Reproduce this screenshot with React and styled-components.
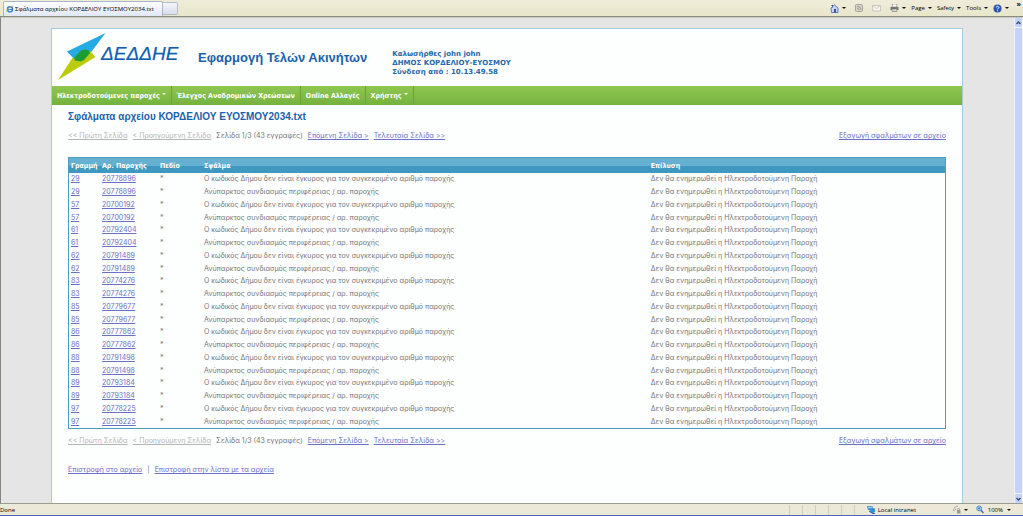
import styled, { createGlobalStyle } from "styled-components";

const GlobalStyle = createGlobalStyle`
  * {
    box-sizing: border-box;
  }

  body {
    margin: 0;
    font-family: Inter, Verdana, sans-serif;
    font-size: 7px;
    color: #777;
    background: #e5e5e5;
  }
`;

const pairs = [
  [29, 20778896],
  [57, 20700192],
  [61, 20792404],
  [62, 20791489],
  [83, 20774276],
  [85, 20779677],
  [86, 20777862],
  [88, 20791498],
  [89, 20793184],
  [97, 20778225],
];

const messages = [
  "Ο κωδικός Δήμου δεν είναι έγκυρος για τον συγκεκριμένο αριθμό παροχής",
  "Ανύπαρκτος συνδιασμός περιφέρειας / αρ. παροχής",
];

const rows = pairs.flatMap(([line, supply]) =>
  messages.map((message) => ({ line, supply, message }))
);

function Pager() {
  return (
    <PagerRow>
      <PagerGroup>
        <MutedLink href="#">&lt;&lt; Πρώτη Σελίδα</MutedLink>
        <MutedLink href="#">&lt; Προηγούμενη Σελίδα</MutedLink>
        <span>Σελίδα 1/3 (43 εγγραφές)</span>
        <TextLink href="#">Επόμενη Σελίδα &gt;</TextLink>
        <TextLink href="#">Τελευταία Σελίδα &gt;&gt;</TextLink>
      </PagerGroup>
      <TextLink href="#">Εξαγωγή σφαλμάτων σε αρχείο</TextLink>
    </PagerRow>
  );
}

function Logo() {
  return (
    <svg width="124" height="50" viewBox="0 0 124 50" role="img" aria-label="ΔΕΔΔΗΕ">
      <path d="M48.5 0 10 18.5 19 27.5H27L35 18Z" fill="#25aae3" />
      <path d="M1 47 20 18H33L38.5 24Z" fill="#bccc0c" />
      <path d="M10 18.5 19 27.5 28 17Z" fill="#25aae3" />
      <path d="M24 17.5 28 16.5 32 17.5 33 20 27 27 24 28.5 18 27.5 17 25Z" fill="#1d9c30" />
      <text
        x="44"
        y="27"
        fontFamily="Liberation Sans, Arial, sans-serif"
        fontSize="19"
        fontStyle="italic"
        fill="#0f5fae"
        stroke="#0f5fae"
        strokeWidth="0.2"
      >
        ΔΕΔΔΗΕ
      </text>
    </svg>
  );
}

function IeIcon() {
  return (
    <svg width="8" height="8" viewBox="0 0 8 8" aria-hidden="true">
      <circle cx="4" cy="4.3" r="2.6" fill="none" stroke="#2a7fd4" strokeWidth="1.4" />
      <path d="M2 4.4H6.6" stroke="#2a7fd4" />
      <path d="M.6 7C0 5 4 .8 7.4 1.2" fill="none" stroke="#e0b040" strokeWidth=".8" />
    </svg>
  );
}

function HomeIcon() {
  return (
    <svg width="9" height="9" viewBox="0 0 9 9" aria-hidden="true">
      <path d="M1 4 4.5 1 8 4V8.5H1.6Z" fill="#c9d5f2" stroke="#4a66ab" strokeWidth=".8" />
      <path d="M1.2 1H3V4" fill="#35529d" />
      <path d="M4 5H6V8.5H4Z" fill="#35529d" />
    </svg>
  );
}

function FeedIcon() {
  return (
    <svg width="8" height="8" viewBox="0 0 8 8" aria-hidden="true">
      <rect x=".5" y=".5" width="7" height="7" rx="1" fill="#d6d5cc" stroke="#a3a39b" />
      <path d="M2 2.2A4 4 0 0 1 6 6M2 4.2A2 2 0 0 1 4 6" fill="none" stroke="#8d8d87" strokeWidth=".8" />
    </svg>
  );
}

function MailIcon() {
  return (
    <svg width="9" height="8" viewBox="0 0 9 8" aria-hidden="true">
      <path d="M.5 1.5H8.5V7H.5Z" fill="#f4f3ee" stroke="#c1bfb4" strokeWidth=".8" />
      <path d="M1 2 4.5 4.5 8 2" fill="none" stroke="#c1bfb4" strokeWidth=".7" />
    </svg>
  );
}

function PrintIcon() {
  return (
    <svg width="9" height="8" viewBox="0 0 9 8" aria-hidden="true">
      <path d="M2.5 0H7L6.5 3H2Z" fill="#fff" stroke="#777" strokeWidth=".6" />
      <path d="M.5 3H8.5V6H.5Z" fill="#77787d" />
      <path d="M2 5H7V7.5H2Z" fill="#d9d9d9" stroke="#666" strokeWidth=".5" />
    </svg>
  );
}

function HelpIcon() {
  return (
    <svg width="9" height="9" viewBox="0 0 9 9" aria-hidden="true">
      <circle cx="4.5" cy="4.5" r="4" fill="#2b52b5" />
      <path d="M3.2 3.6C3.2 1.8 6 1.9 5.9 3.5 5.8 4.4 4.6 4.4 4.6 5.4M4.6 6.3V7.2" fill="none" stroke="#fff" strokeWidth="1" />
    </svg>
  );
}

function IntranetIcon() {
  return (
    <svg width="9" height="9" viewBox="0 0 9 9" aria-hidden="true">
      <path d="M0 1H5.5V5H1Z" fill="#3c7ed0" />
      <path d="M1 1.6H5V3.4H1Z" fill="#9bd0f5" />
      <circle cx="5.6" cy="5.3" r="2.6" fill="#3192cf" />
      <path d="M2 6 6 8.6H8" fill="none" stroke="#285ba8" />
    </svg>
  );
}

function ShieldIcon() {
  return (
    <svg width="8" height="9" viewBox="0 0 8 9" aria-hidden="true">
      <path d="M.5 6C1 2 3 .8 5 1.4M1.5 5.5 3 4" fill="none" stroke="#a8a79e" />
      <path d="M4 5H7.5V8.5H4Z" fill="#9a9a94" />
      <path d="M4.8 5V3.6H6.6V5" fill="none" stroke="#9a9a94" strokeWidth=".7" />
    </svg>
  );
}

function ZoomIcon() {
  return (
    <svg width="8" height="9" viewBox="0 0 8 9" aria-hidden="true">
      <circle cx="3.2" cy="3.4" r="2.4" fill="#bfe0fa" stroke="#4386cf" />
      <path d="M2 3.4H4.4M3.2 2.2V4.6" stroke="#225fae" strokeWidth=".7" />
      <path d="M5 5.3 7.4 8" stroke="#4b5f91" strokeWidth="1.3" />
    </svg>
  );
}

export default function App() {
  return (
    <>
      <GlobalStyle />
      <Browser>
        <TabBar>
          <Tab type="button">
            <IeIcon />
            Σφάλματα αρχείου ΚΟΡΔΕΛΙΟΥ ΕΥΟΣΜΟΥ2034.txt
          </Tab>
          <NewTab type="button" aria-label="New tab" />
          <CommandBar>
            <Command type="button" $spaced aria-label="Home"><HomeIcon /><Caret /></Command>
            <Command type="button" $spaced aria-label="Feeds"><FeedIcon /></Command>
            <Command type="button" $spaced aria-label="Mail"><MailIcon /></Command>
            <Command type="button" aria-label="Print"><PrintIcon /><Caret /></Command>
            <Command type="button">Page<Caret /></Command>
            <Command type="button">Safety<Caret /></Command>
            <Command type="button">Tools<Caret /></Command>
            <Command type="button" aria-label="Help"><HelpIcon /><Caret /></Command>
          </CommandBar>
          <More type="button">»</More>
        </TabBar>

        <Viewport>
          <Page>
            <Header>
              <Logo />
              <AppTitle>Εφαρμογή Τελών Ακινήτων</AppTitle>
              <Welcome>
                Καλωσήρθες john john
                <br />
                ΔΗΜΟΣ ΚΟΡΔΕΛΙΟΥ-ΕΥΟΣΜΟΥ
                <br />
                Σύνδεση από : 10.13.49.58
              </Welcome>
            </Header>

            <Nav>
              <NavLink href="#">Ηλεκτροδοτούμενες παροχές<NavCaret /></NavLink>
              <NavLink href="#">Έλεγχος Αναδρομικών Χρεώσεων</NavLink>
              <NavLink href="#">Online Αλλαγές</NavLink>
              <NavLink href="#">Χρήστης<NavCaret /></NavLink>
            </Nav>

            <Content>
              <Title>Σφάλματα αρχείου ΚΟΡΔΕΛΙΟΥ ΕΥΟΣΜΟΥ2034.txt</Title>
              <Pager />
              <ErrorTable>
                <colgroup>
                  <Col $width="31px" />
                  <Col $width="58px" />
                  <Col $width="44px" />
                  <Col $width="51%" />
                  <Col />
                </colgroup>
                <thead>
                  <tr>
                    <th>Γραμμή</th>
                    <th>Αρ. Παροχής</th>
                    <th>Πεδίο</th>
                    <th>Σφάλμα</th>
                    <th>Επίλυση</th>
                  </tr>
                </thead>
                <tbody>
                  {rows.map((row, i) => (
                    <tr key={i}>
                      <td><TextLink href="#">{row.line}</TextLink></td>
                      <td><TextLink href="#">{row.supply}</TextLink></td>
                      <td>*</td>
                      <td>{row.message}</td>
                      <td>Δεν θα ενημερωθεί η Ηλεκτροδοτούμενη Παροχή</td>
                    </tr>
                  ))}
                </tbody>
              </ErrorTable>
              <Pager />
              <BackLinks>
                <TextLink href="#">Επιστροφή στο αρχείο</TextLink>
                <span>|</span>
                <TextLink href="#">Επιστροφή στην λίστα με τα αρχεία</TextLink>
              </BackLinks>
            </Content>
          </Page>
          <ScrollBar>
            <ScrollButton type="button" aria-label="Scroll up">
              <svg width="5" height="4" viewBox="0 0 5 4"><path d="M.5 3 2.5 1 4.5 3" fill="none" stroke="#34486e" strokeWidth="1.3" /></svg>
            </ScrollButton>
            <ScrollThumb />
            <ScrollButton type="button" aria-label="Scroll down">
              <svg width="5" height="4" viewBox="0 0 5 4"><path d="M.5 1 2.5 3 4.5 1" fill="none" stroke="#34486e" strokeWidth="1.3" /></svg>
            </ScrollButton>
          </ScrollBar>
        </Viewport>

        <StatusBar>
          <StatusText>Done</StatusText>
          <Panes>
            <i /><i /><i /><i /><i /><i />
          </Panes>
          <Zone><IntranetIcon />Local intranet</Zone>
          <Command type="button" aria-label="Protected mode"><ShieldIcon /><Caret /></Command>
          <ZoomButton type="button"><ZoomIcon />100%<Caret /></ZoomButton>
        </StatusBar>
      </Browser>
    </>
  );
}

const chromeFont = `"Open Sans", Tahoma, sans-serif`;
const boldFont = `"DejaVu Sans Condensed", Verdana, sans-serif`;

const Browser = styled.div`
  display: flex;
  flex-direction: column;
  min-height: 100vh;
`;

const TabBar = styled.div`
  display: flex;
  align-items: flex-end;
  height: 17px;
  padding-left: 3px;
  background: linear-gradient(#efecd9, #e9e6cd);
  border-bottom: 1px solid #8a8a80;
`;

const Tab = styled.button`
  display: flex;
  align-items: center;
  gap: 1px;
  width: 160px;
  height: 15px;
  padding: 0 2px;
  border: 1px solid #a9b4c6;
  border-bottom: 0;
  border-radius: 2px 2px 0 0;
  background: linear-gradient(#fff, #dfe8f6);
  font: 6px ${chromeFont};
  color: #000;
  white-space: nowrap;

  svg {
    flex-shrink: 0;
  }
`;

const NewTab = styled.button`
  width: 15px;
  height: 13px;
  margin-bottom: 1px;
  padding: 0;
  border: 1px solid #b5bccb;
  border-left: 0;
  border-radius: 0 2px 2px 0;
  background: linear-gradient(#f3f5fa, #d8dfea);
`;

const CommandBar = styled.div`
  display: flex;
  align-items: center;
  gap: 5px;
  height: 16px;
  margin-left: auto;
`;

const Command = styled.button`
  display: flex;
  align-items: center;
  gap: 3px;
  margin-right: ${({ $spaced }) => ($spaced ? "4px" : "0")};
  padding: 0;
  border: 0;
  background: none;
  font: 6px ${chromeFont};
  color: #000;
`;

const Caret = styled.span`
  border: 2px solid transparent;
  border-top-color: #111;
  border-bottom: 0;
`;

const More = styled.button`
  align-self: flex-start;
  width: 14px;
  padding: 0 2px 0 0;
  border: 0;
  background: none;
  font: bold 8px "Liberation Sans", sans-serif;
  text-align: right;
`;

const Viewport = styled.div`
  display: flex;
  flex: 1;
  border-top: 1px solid #c9c8bf;
  border-left: 1px solid #85857e;
`;

const Page = styled.div`
  flex: 1;
  margin: 10px 51px 0 50px;
  border: 1px solid #a6cbdc;
  border-bottom: 0;
  background: #fdfefe;
`;

const Header = styled.header`
  display: flex;
  height: 57px;
  padding: 4px 5px;
`;

const AppTitle = styled.h1`
  margin: 16px 0 0 17px;
  font: bold 13px/18px "Liberation Sans", Arial, sans-serif;
  color: #1b62ab;
  white-space: nowrap;
`;

const Welcome = styled.p`
  margin: 17px 0 0 25px;
  font: bold 7px/9px "DejaVu Sans", Verdana, sans-serif;
  color: #2867a8;
  white-space: nowrap;
`;

const Nav = styled.nav`
  display: flex;
  height: 19px;
  background: linear-gradient(#8fc64f, #82bd48 50%, #74b23d);
`;

const NavLink = styled.a`
  display: flex;
  align-items: center;
  gap: 2px;
  padding: 0 5px;
  border-right: 1px solid #6ba23a;
  font: bold 7px ${boldFont};
  color: #fff;
  text-decoration: none;
  white-space: nowrap;
`;

const NavCaret = styled.span`
  margin-bottom: 3px;
  border: 2px solid transparent;
  border-top-color: #fff;
  border-bottom: 0;
`;

const Content = styled.main`
  padding: 5px 16px 0;
`;

const Title = styled.h2`
  margin: 0;
  font: bold 10px/14px "Liberation Sans", Arial, sans-serif;
  color: #1b62ab;
`;

const PagerRow = styled.div`
  display: flex;
  justify-content: space-between;
  margin: 7px 0;
  line-height: 10px;
`;

const PagerGroup = styled.div`
  display: flex;
  gap: 5px;
`;

const TextLink = styled.a`
  color: #6a6fc8;
  text-decoration: underline;
`;

const MutedLink = styled(TextLink)`
  color: #b5b5b5;
`;

const ErrorTable = styled.table`
  width: 100%;
  height: 272px;
  margin-top: 16px;
  border: 1px solid #4c9dc0;
  border-spacing: 0;
  table-layout: fixed;

  th,
  td {
    padding: 0 2px;
    line-height: 12px;
    text-align: left;
    white-space: nowrap;
  }

  thead tr {
    height: 15px;
    background: linear-gradient(#66b0d1 50%, #3f98c0 55%);
  }

  th {
    font-family: ${boldFont};
    color: #fff;
  }
`;

const Col = styled.col`
  width: ${({ $width }) => $width || "auto"};
`;

const BackLinks = styled.div`
  display: flex;
  gap: 5px;
  margin-top: 19px;
  line-height: 10px;
`;

const ScrollBar = styled.div`
  display: flex;
  flex-direction: column;
  width: 9px;
  padding: 0 1px;
  background: #f3f4fb;
`;

const ScrollButton = styled.button`
  display: flex;
  align-items: center;
  justify-content: center;
  height: 9px;
  padding: 0;
  border: 0;
  border-radius: 1px;
  background: #c3d3fd;
`;

const ScrollThumb = styled.div`
  flex: 1;
  margin: 1px 0;
  border-radius: 1px;
  background: #c3d3fd;
`;

const StatusBar = styled.footer`
  display: flex;
  align-items: center;
  height: 13px;
  border-top: 1px solid #9b9b90;
  border-bottom: 1px solid #4668b8;
  background: #ece9d8;
  font: 6px ${chromeFont};
  color: #000;
`;

const StatusText = styled.span`
  flex: 1;
`;

const Panes = styled.div`
  display: flex;

  i {
    width: 13px;
    height: 10px;
    border-left: 1px solid #d2cfbd;
  }
`;

const Zone = styled.div`
  display: flex;
  align-items: center;
  gap: 2px;
  width: 86px;
`;

const ZoomButton = styled(Command)`
  gap: 4px;
  margin: 0 12px 0 8px;
`;
